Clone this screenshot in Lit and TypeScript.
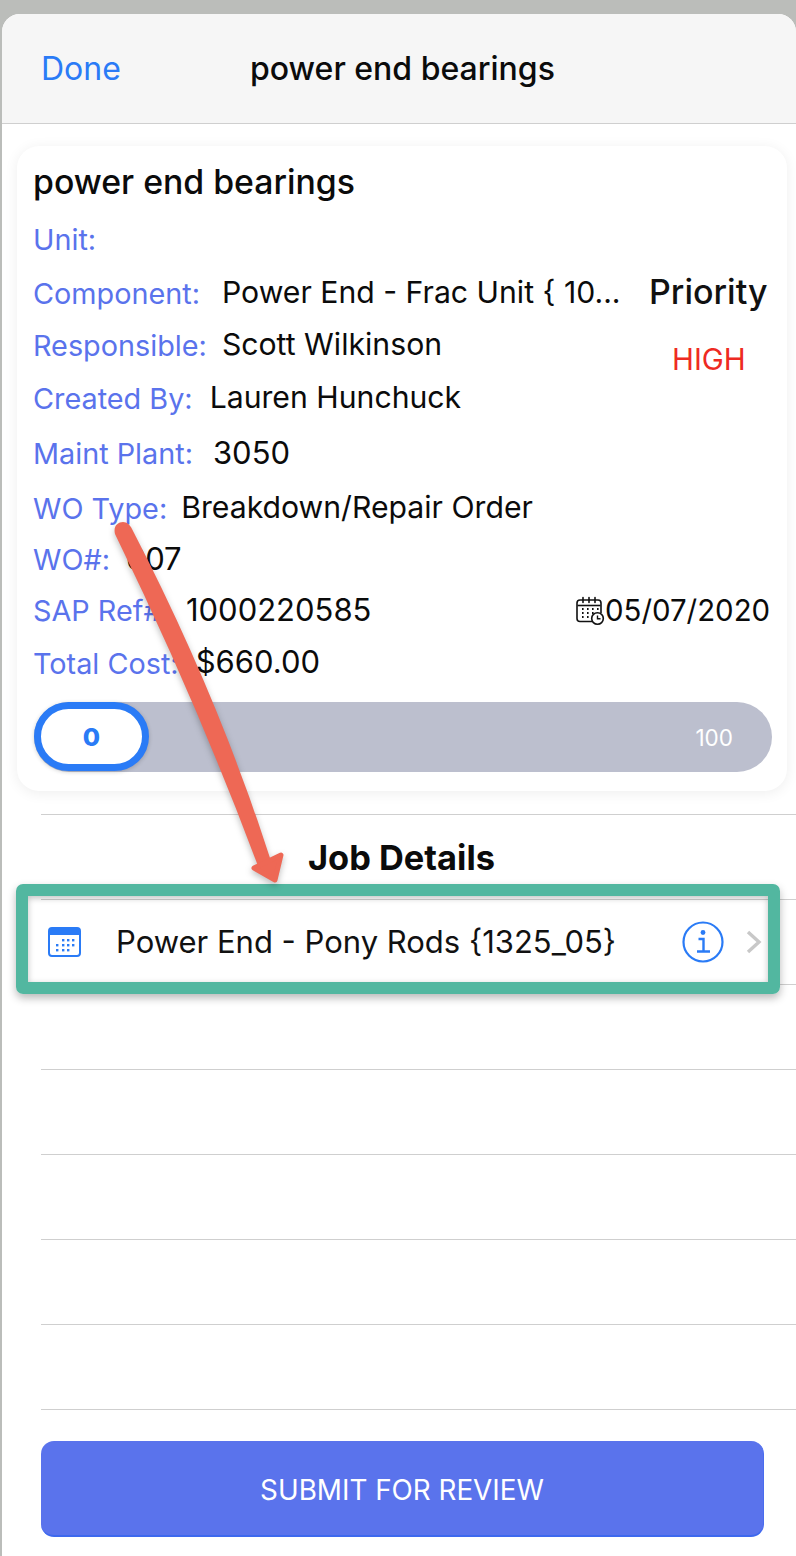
import { LitElement, html, css, svg } from "lit";
import { customElement } from "lit/decorators.js";

const rows = [
  { label: "Unit:", value: "", gap: 0, h: 55, big: false },
  { label: "Component:", value: "Power End - Frac Unit { 10...", gap: 22, h: 52, big: false },
  { label: "Responsible:", value: "Scott Wilkinson", gap: 15, h: 52, big: false },
  { label: "Created By:", value: "Lauren Hunchuck", gap: 17, h: 55, big: false },
  { label: "Maint Plant:", value: "3050", gap: 20, h: 55, big: true },
  { label: "WO Type:", value: "Breakdown/Repair Order", gap: 14, h: 54, big: false },
  { label: "WO#:", value: "607", gap: 16, h: 49, big: true },
  { label: "SAP Ref#:", value: "1000220585", gap: 16, h: 53, big: true },
  { label: "Total Cost:", value: "$660.00", gap: 17, h: 52, big: true },
];

@customElement("app-root")
export class AppRoot extends LitElement {
  static styles = css`
    :host { display: block; width: 796px; height: 1556px; background: #bbbdba; font-family: Inter, "Noto Sans", sans-serif; overflow: hidden; position: relative; }
    .sheet { margin: 14px 0 0 2px; height: 1542px; background: #fff; border-radius: 18px 18px 0 0; overflow: hidden; display: flex; flex-direction: column; }
    .nav { height: 110px; flex: none; background: #f6f6f6; border-bottom: 1px solid #cfcfcf; box-sizing: border-box; display: flex; align-items: center; padding: 0 0 0 39px; }
    .done { color: #2a7bf6; font-size: 32px; font-weight: 400; width: 209px; }
    .nav-title { color: #0b0b0b; font-size: 32px; font-weight: 500; }
    .body { flex: 1; background: #fff; padding-top: 22px; }
    .card { margin: 0 9px 0 15px; height: 645px; box-sizing: border-box; padding: 17px 0 0 17px; background: #fff; border-radius: 22px; box-shadow: 0 2px 14px rgba(0,0,0,.07); position: relative; }
    .card-title { font-size: 33.8px; font-weight: 500; color: #0b0b0b; line-height: 38px; height: 49px; margin-left: -1px; }
    .row { display: flex; align-items: center; margin-left: -1px; }
    .lab { color: #5a73ec; font-size: 28.8px; }
    .val { color: #0b0b0b; font-size: 30.2px; padding-bottom: 3px; }
    .val.big { font-size: 31px; }
    .priority { position: absolute; left: 633px; top: 125px; font-size: 34px; font-weight: 500; color: #111; margin-left: -1px; }
    .high { position: absolute; left: 655px; top: 195px; font-size: 29.5px; color: #ee2a22; }
    .date { position: absolute; left: 558px; top: 447px; display: flex; align-items: center; font-size: 29.4px; color: #0b0b0b; }
    .date svg { width: 30px; height: 30px; }
    .slider { margin-top: 13px; height: 70px; border-radius: 35px; background: #bcbfce; position: relative; display: flex; align-items: center; justify-content: flex-end; padding-right: 39px; color: #fff; font-size: 22.5px; width: 738px; box-sizing: border-box; }
    .thumb { position: absolute; left: 0; top: 0; width: 115px; height: 69px; box-sizing: border-box; border: 7px solid #2a7bf6; border-radius: 35px; background: #fff; color: #2a7bf6; font-size: 25px; font-weight: 800; display: flex; align-items: center; justify-content: center; box-shadow: 0 1px 4px rgba(0,0,0,.2); }
    .list { margin: 23px 0 0 39px; }
    .li { height: 85px; box-sizing: border-box; border-top: 1px solid #cfcfcf; display: flex; align-items: center; }
    .li.head { justify-content: center; padding: 0 34px 0 0; font-size: 34.4px; font-weight: 700; color: #0b0b0b; }
    .li.job { color: #111; font-size: 31px; }
    .job .cal { width: 33px; height: 30px; margin: 0 36px 0 7px; flex: none; }
    .job .title { flex: 1; margin: 0 0 2px -1px; }
    .job .info { width: 42px; height: 42px; flex: none; margin-right: 22px; }
    .job .chev { width: 16px; height: 24px; flex: none; margin-right: 34px; }
    .submit { position: absolute; left: 41px; top: 1441px; width: 723px; height: 96px; box-sizing: border-box; padding: 3px 0 0; background: #5a73ec; border: 0; border-bottom: 2px solid #3d68ee; border-right: 1px solid #4a6cee; border-radius: 13px; color: #fff; font-family: inherit; font-size: 27.8px; font-weight: 400; display: flex; align-items: center; justify-content: center; }
    .frame { position: absolute; left: 16px; top: 884px; width: 764px; height: 110px; box-sizing: border-box; border: 12px solid #52b7a0; border-radius: 7px; box-shadow: 0 4px 9px rgba(0,0,0,.28), inset 0 2px 6px rgba(0,0,0,.25); pointer-events: none; }
    .arrow { position: absolute; left: 0; top: 0; width: 796px; height: 1556px; pointer-events: none; filter: drop-shadow(0 3px 3px rgba(0,0,0,.25)); }
  `;

  render() {
    return html`
      <div class="sheet">
        <div class="nav"><span class="done">Done</span><span class="nav-title">power end bearings</span></div>
        <div class="body">
          <div class="card">
            <div class="card-title">power end bearings</div>
            ${rows.map(r => html`<div class="row" style="height:${r.h}px;gap:${r.gap}px"><span class="lab">${r.label}</span><span class="val ${r.big ? "big" : ""}">${r.value}</span></div>`)}
            <div class="priority">Priority</div>
            <div class="high">HIGH</div>
            <div class="date">
              <svg viewBox="0 0 30 30" fill="none" stroke="#111" stroke-width="1.6">
                <path d="M18 25.5H5a3 3 0 0 1-3-3V7a3 3 0 0 1 3-3h18a3 3 0 0 1 3 3v10" />
                <path d="M8 1.5v5M14 1.5v5M20 1.5v5" stroke-linecap="round"/>
                <path d="M2.5 9.5h23" />
                <path d="M7 13h1.6M12 13h1.6M17 13h1.6M22 13h1.6M7 17h1.6M12 17h1.6M17 17h1.6M7 21h1.6M12 21h1.6" stroke-width="2"/>
                <circle cx="22.5" cy="22.5" r="5.8" />
                <path d="M22.5 19.5v3.2h3" stroke-width="1.4"/>
              </svg>05/07/2020
            </div>
            <div class="slider"><div class="thumb">0</div>100</div>
          </div>
          <div class="list">
            <div class="li head">Job Details</div>
            <div class="li job">
              <svg class="cal" viewBox="0 0 33 30">
                <rect x="1" y="1" width="31" height="28" rx="3" fill="#fff" stroke="#2a7bf6" stroke-width="2"/>
                <path d="M1 8V4a3 3 0 0 1 3-3h25a3 3 0 0 1 3 3v4z" fill="#2a7bf6"/>
                ${[[15,13],[20,13],[25,13],[9,18],[15,18],[20,18],[25,18],[9,23],[15,23],[20,23]].map(([x,y]) => svg`<rect x="${x-1}" y="${y-1}" width="2.4" height="2.4" fill="#2a7bf6"/>`)}
              </svg>
              <span class="title">Power End - Pony Rods {1325_05}</span>
              <svg class="info" viewBox="0 0 42 42" fill="none" stroke="#2a7bf6">
                <circle cx="21" cy="21" r="19.5" stroke-width="2.2"/>
                <circle cx="21" cy="11.5" r="2.4" fill="#2a7bf6" stroke="none"/>
                <path d="M16.5 18H21.5V30M15 30.5H28" stroke-width="2.4"/>
              </svg>
              <svg class="chev" viewBox="0 0 16 24" fill="none" stroke="#c8c8c8" stroke-width="3.4"><path d="M2 2l11 10L2 22"/></svg>
            </div>
            <div class="li"></div><div class="li"></div><div class="li"></div><div class="li"></div><div class="li"></div><div class="li"></div>
          </div>
        </div>
      </div>
      <button class="submit">SUBMIT FOR REVIEW</button>
      <div class="frame"></div>
      <svg class="arrow" viewBox="0 0 796 1556" fill="none">
        <path d="M115 534C113 526 118 522 123 522C127 522 130 525 132 529Q217 693 270 858L258 866Q196 700 115 534Z" fill="#ee6855"/>
        <path d="M254 868L281 855L275 880Z" fill="#ee6855" stroke="#ee6855" stroke-width="5" stroke-linejoin="round"/>
      </svg>
    `;
  }
}
